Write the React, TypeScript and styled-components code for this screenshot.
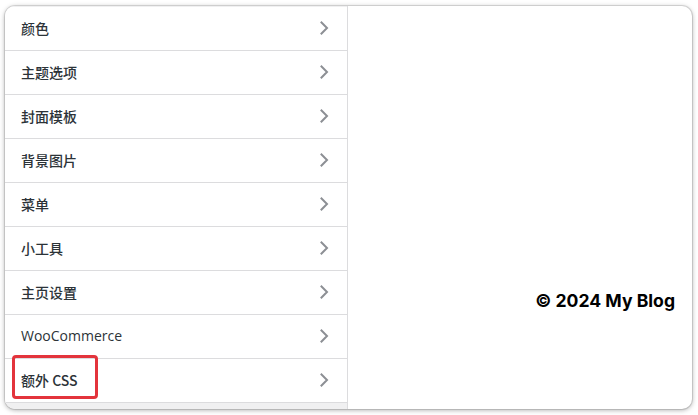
import React from "react";
import styled, { createGlobalStyle } from "styled-components";

const Global = createGlobalStyle`
  html, body { margin: 0; padding: 0; background: #ffffff; }
  body { font-family: "Noto Sans CJK SC", "Open Sans", sans-serif; }
  * { box-sizing: border-box; }
`;

const Frame = styled.div`
  width: 698px;
  height: 415px;
  padding: 6px 6px 6px 5px;
`;

const Card = styled.div`
  width: 687px;
  height: 403px;
  border-radius: 10px;
  background: #ffffff;
  box-shadow: 0 0 0 1px rgba(0, 0, 0, 0.1), 0 1px 5px rgba(0, 0, 0, 0.35);
  overflow: hidden;
  display: flex;
`;

const Sidebar = styled.div`
  width: 343px;
  flex: none;
  border-right: 1px solid #dcdcde;
  background: #f0f0f1;
  display: flex;
  flex-direction: column;
  padding-top: 1px;
`;

const Row = styled.div`
  position: relative;
  height: 44px;
  flex: none;
  background: #ffffff;
  border-bottom: 1px solid #dcdcde;
  display: flex;
  align-items: center;
  justify-content: space-between;
  padding: 0 15px 2px 16px;
  color: #2c3338;
  font-size: 14px;
  font-family: "Noto Sans CJK SC", "Open Sans", sans-serif;
  font-weight: 500;
`;

const Label = styled.span<{ $latin?: boolean }>`
  font-family: ${(p) =>
    p.$latin
      ? '"Open Sans", "Noto Sans", sans-serif'
      : '"Noto Sans CJK SC", "Open Sans", sans-serif'};
  font-weight: 500;
  line-height: 1;
`;

const Highlight = styled.div`
  position: absolute;
  left: 7px;
  top: -4px;
  width: 86px;
  height: 44px;
  border: 3px solid #e3343c;
  border-radius: 4px;
  pointer-events: none;
`;

const Main = styled.div`
  flex: 1;
  display: flex;
  flex-direction: column;
  justify-content: flex-end;
  align-items: flex-end;
  padding: 0 17px 98px 0;
`;

const Footer = styled.div`
  font-family: Inter, "Liberation Sans", sans-serif;
  font-weight: 700;
  font-size: 17.6px;
  color: #000000;
`;

const Chevron = () => (
  <svg width="16" height="16" viewBox="0 0 16 16" fill="none">
    <polyline
      points="5.5,2.5 11,8 5.5,13.5"
      stroke="#8c8f94"
      strokeWidth="2"
      strokeLinecap="square"
      strokeLinejoin="miter"
    />
  </svg>
);

const items: { label: string; latin?: boolean; highlight?: boolean }[] = [
  { label: "颜色" },
  { label: "主题选项" },
  { label: "封面模板" },
  { label: "背景图片" },
  { label: "菜单" },
  { label: "小工具" },
  { label: "主页设置" },
  { label: "WooCommerce", latin: true },
  { label: "额外 CSS", highlight: true },
];

export default function App() {
  return (
    <>
      <Global />
      <Frame>
        <Card>
          <Sidebar>
            {items.map((it) => (
              <Row key={it.label}>
                <Label $latin={it.latin}>{it.label}</Label>
                <Chevron />
                {it.highlight && <Highlight />}
              </Row>
            ))}
          </Sidebar>
          <Main>
            <Footer>© 2024 My Blog</Footer>
          </Main>
        </Card>
      </Frame>
    </>
  );
}
